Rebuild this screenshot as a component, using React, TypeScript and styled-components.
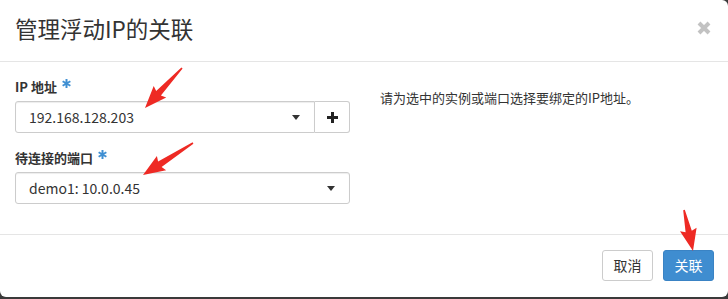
import React, { FC } from 'react';
import styled, { createGlobalStyle } from 'styled-components';

const GlobalStyle = createGlobalStyle`
  html, body { margin: 0; padding: 0; background: #3a3a3a; }
  body { font-family: "Noto Sans CJK SC", "Noto Sans", sans-serif; color: #333; }
  * { box-sizing: border-box; }
`;

const Stage = styled.div`
  position: relative;
  width: 728px;
  height: 299px;
  overflow: hidden;
`;

const Modal = styled.div`
  width: 728px;
  height: 297px;
  background: #fff;
  border-radius: 0 6px 6px 6px;
  display: flex;
  flex-direction: column;
`;

const Header = styled.div`
  height: 62px;
  border-bottom: 1px solid #e5e5e5;
  padding: 0 14px 0 15px;
  display: flex;
  align-items: center;
  justify-content: space-between;
`;

const Title = styled.h4`
  margin: 0 0 4px;
  font-size: 22.5px;
  font-weight: 400;
  line-height: 1.2;
  color: #333;
`;

const CloseButton = styled.button`
  border: 0;
  background: transparent;
  padding: 0;
  margin: 0 0 6px;
  width: 20px;
  height: 20px;
  display: flex;
  align-items: center;
  justify-content: center;
  cursor: pointer;
`;

const Body = styled.div`
  flex: 1;
  padding: 15px 15px 0;
  display: flex;
  gap: 30px;
  border-bottom: 1px solid #e5e5e5;
`;

const FormColumn = styled.div`
  width: 335px;
  display: flex;
  flex-direction: column;
  gap: 15px;
`;

const FormGroup = styled.div`
  display: flex;
  flex-direction: column;
  gap: 5px;
`;

const Label = styled.label`
  font-size: 13px;
  font-weight: 700;
  line-height: 19px;
  color: #333;
  display: flex;
  align-items: flex-start;
`;

const Required = styled.svg`
  margin: 2px 0 0 5px;
`;

const InputGroup = styled.div`
  display: flex;
`;

const Select = styled.div<{ $grouped?: boolean }>`
  flex: ${({ $grouped }) => ($grouped ? '1 1 auto' : 'none')};
  height: 32px;
  border: 1px solid #ccc;
  border-radius: ${({ $grouped }) => ($grouped ? '3px 0 0 3px' : '3px')};
  box-shadow: inset 0 1px 1px rgba(0, 0, 0, 0.075);
  display: flex;
  align-items: center;
  justify-content: space-between;
  padding: 0 14px 0 13px;
  font-size: 14px;
  color: #333;
`;

const Caret = styled.span`
  width: 0;
  height: 0;
  border-left: 4.5px solid transparent;
  border-right: 4.5px solid transparent;
  border-top: 5px solid #333;
  margin-top: 1px;
`;

const AddonButton = styled.button`
  width: 35px;
  height: 32px;
  border: 1px solid #ccc;
  border-left: 0;
  border-radius: 0 3px 3px 0;
  background: #fff;
  display: flex;
  align-items: center;
  justify-content: center;
  padding: 0;
`;

const HelpColumn = styled.div`
  flex: 1;
  padding-top: 11px;
  font-size: 13px;
  line-height: 20px;
  color: #333;
`;

const Footer = styled.div`
  height: 62px;
  padding: 0 14px 0 15px;
  display: flex;
  align-items: center;
  justify-content: flex-end;
  gap: 10px;
`;

const Button = styled.button<{ $primary?: boolean }>`
  height: 31px;
  width: 51px;
  padding: 0;
  font-family: inherit;
  font-size: 14px;
  border-radius: 3px;
  border: 1px solid ${({ $primary }) => ($primary ? '#3a83c4' : '#ccc')};
  background: ${({ $primary }) => ($primary ? '#3f8dd0' : '#fff')};
  color: ${({ $primary }) => ($primary ? '#fff' : '#333')};
  margin-bottom: 2px;
`;

const Overlay = styled.svg`
  position: absolute;
  left: 0;
  top: 0;
  pointer-events: none;
`;

type Pt = [number, number];

const arrowPoints = (tail: Pt, tip: Pt) => {
  const dx = tip[0] - tail[0];
  const dy = tip[1] - tail[1];
  const len = Math.hypot(dx, dy);
  const ux = dx / len, uy = dy / len;
  const nx = -uy, ny = ux;
  const head = 20;
  const bx = tip[0] - ux * head, by = tip[1] - uy * head;
  const p = (x: number, y: number, w: number) => [x + nx * w, y + ny * w];
  const pts = [
    p(tail[0], tail[1], 0.8),
    p(bx, by, 3.2),
    p(bx - ux * 2, by - uy * 2, 8.5),
    tip,
    p(bx - ux * 2, by - uy * 2, -8.5),
    p(bx, by, -3.2),
    p(tail[0], tail[1], -0.8),
  ];
  return pts.map(([x, y]) => `${x.toFixed(1)},${y.toFixed(1)}`).join(' ');
};

const Arrow: FC<{ tail: Pt; tip: Pt }> = ({ tail, tip }) => (
  <polygon points={arrowPoints(tail, tip)} fill="#ee2a24" />
);

const Asterisk: FC = () => (
  <Required width="9" height="9" viewBox="0 0 10 10">
    <path d="M5 0 V10 M0.7 2.5 L9.3 7.5 M9.3 2.5 L0.7 7.5" stroke="#3f8fd2" strokeWidth="2.2" />
  </Required>
);

export default function App() {
  return (
    <>
      <GlobalStyle />
      <Stage>
        <Modal>
          <Header>
            <Title>管理浮动IP的关联</Title>
            <CloseButton aria-label="close">
              <svg width="14" height="14" viewBox="0 0 14 14">
                <path d="M2 2 L12 12 M12 2 L2 12" stroke="#c2c2c2" strokeWidth="4" strokeLinecap="butt" />
              </svg>
            </CloseButton>
          </Header>
          <Body>
            <FormColumn>
              <FormGroup>
                <Label>IP 地址<Asterisk /></Label>
                <InputGroup>
                  <Select $grouped>
                    <span>192.168.128.203</span>
                    <Caret />
                  </Select>
                  <AddonButton>
                    <svg width="11" height="11" viewBox="0 0 11 11">
                      <path d="M5.5 0 V11 M0 5.5 H11" stroke="#222" strokeWidth="3" />
                    </svg>
                  </AddonButton>
                </InputGroup>
              </FormGroup>
              <FormGroup>
                <Label>待连接的端口<Asterisk /></Label>
                <Select>
                  <span>demo1: 10.0.0.45</span>
                  <Caret />
                </Select>
              </FormGroup>
            </FormColumn>
            <HelpColumn>请为选中的实例或端口选择要绑定的IP地址。</HelpColumn>
          </Body>
          <Footer>
            <Button>取消</Button>
            <Button $primary>关联</Button>
          </Footer>
        </Modal>
        <Overlay width="728" height="299" viewBox="0 0 728 299">
          <Arrow tail={[182, 68]} tip={[145, 108]} />
          <Arrow tail={[193, 143]} tip={[143, 175]} />
          <Arrow tail={[684, 210]} tip={[693, 251]} />
        </Overlay>
      </Stage>
    </>
  );
}
